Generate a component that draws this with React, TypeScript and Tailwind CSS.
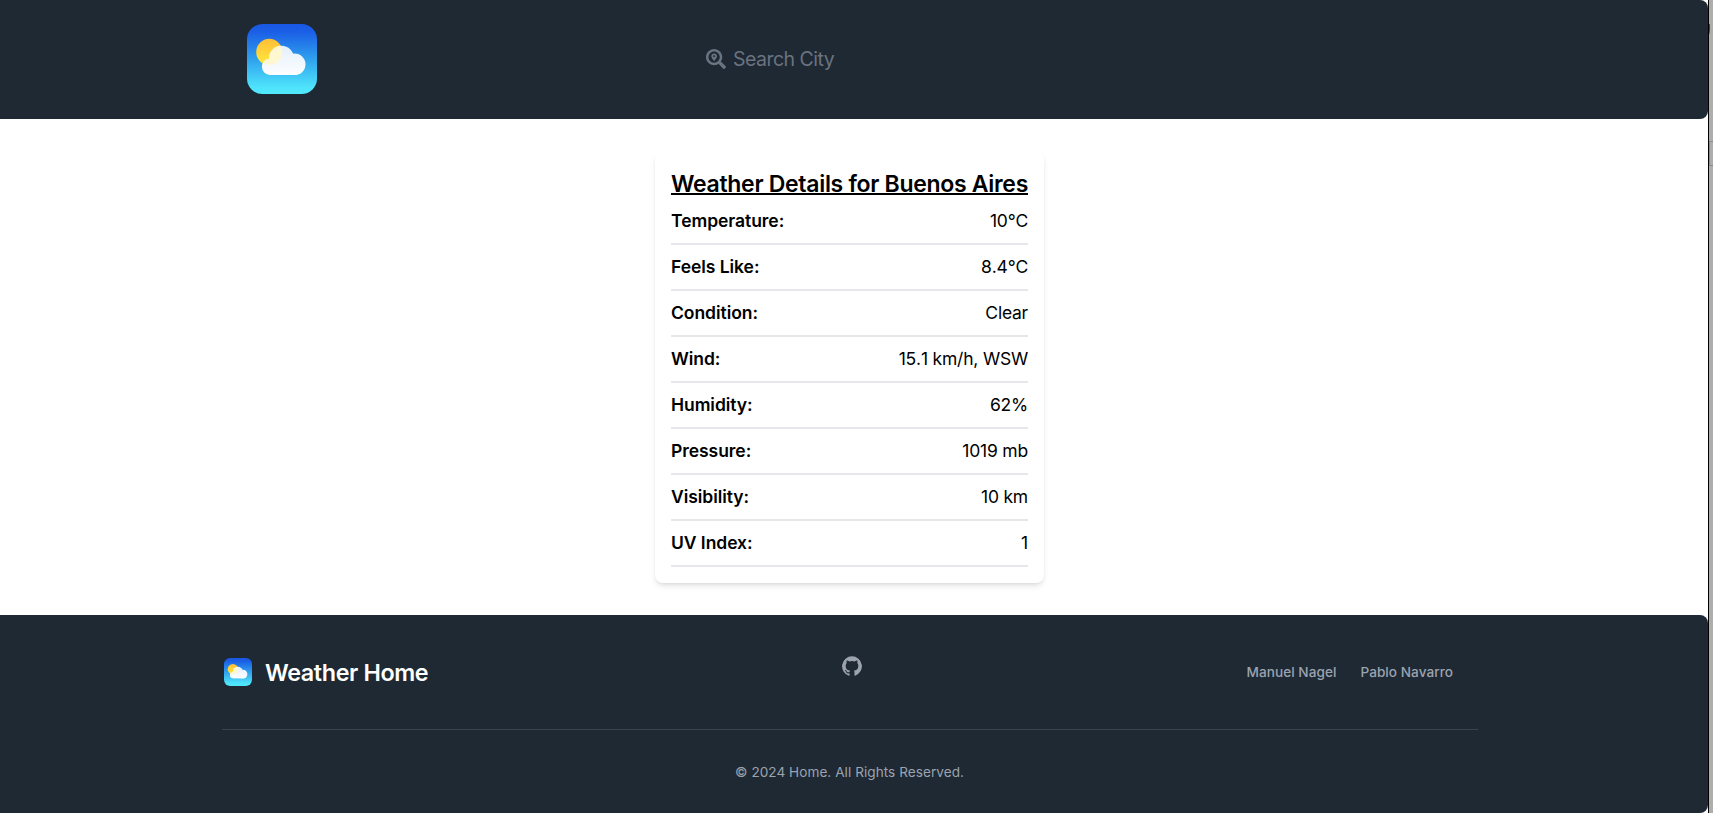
import { useId } from "react";
import { FaSearchLocation } from "react-icons/fa";

const details = [
  { label: "Temperature:", value: "10°C" },
  { label: "Feels Like:", value: "8.4°C" },
  { label: "Condition:", value: "Clear" },
  { label: "Wind:", value: "15.1 km/h, WSW" },
  { label: "Humidity:", value: "62%" },
  { label: "Pressure:", value: "1019 mb" },
  { label: "Visibility:", value: "10 km" },
  { label: "UV Index:", value: "1" },
];

function CloudShape() {
  return (
    <>
      <circle cx="34.5" cy="34.3" r="12.5" />
      <circle cx="47.7" cy="40.3" r="10.8" />
      <circle cx="23" cy="42.8" r="8.1" />
      <rect x="23" y="36" width="25" height="15" />
    </>
  );
}

function WeatherLogo({ className }: { className: string }) {
  const id = useId();
  return (
    <svg viewBox="0 0 70 70" className={className} aria-hidden="true">
      <defs>
        <linearGradient id={`${id}sky`} x1="0" y1="0" x2="0" y2="1">
          <stop offset="0" stopColor="#1a57e4" />
          <stop offset="0.12" stopColor="#1b60e6" />
          <stop offset="0.5" stopColor="#2fa0ee" />
          <stop offset="0.9" stopColor="#4ee3fb" />
          <stop offset="1" stopColor="#50e9fd" />
        </linearGradient>
        <linearGradient id={`${id}sun`} x1="0" y1="0" x2="0" y2="1">
          <stop offset="0" stopColor="#ffbe38" />
          <stop offset="1" stopColor="#ffe93c" />
        </linearGradient>
        <linearGradient id={`${id}cloud`} gradientUnits="userSpaceOnUse" x1="0" y1="22" x2="0" y2="51">
          <stop offset="0" stopColor="#e3effc" />
          <stop offset="1" stopColor="#fdfeff" />
        </linearGradient>
        <clipPath id={`${id}clip`}>
          <CloudShape />
        </clipPath>
      </defs>
      <rect width="70" height="70" rx="15.5" fill={`url(#${id}sky)`} />
      <circle cx="22.3" cy="27.9" r="13.1" fill={`url(#${id}sun)`} />
      <g fill={`url(#${id}cloud)`}>
        <CloudShape />
      </g>
      <circle cx="22.3" cy="27.9" r="13.1" fill="#fff6d2" clipPath={`url(#${id}clip)`} />
    </svg>
  );
}

function GithubIcon() {
  return (
    <svg viewBox="0 0 20 20" fill="currentColor" className="size-5" aria-hidden="true">
      <path
        fillRule="evenodd"
        clipRule="evenodd"
        d="M10 .333A9.911 9.911 0 0 0 6.866 19.65c.5.092.678-.215.678-.477 0-.237-.01-1.017-.014-1.845-2.757.6-3.338-1.169-3.338-1.169a2.627 2.627 0 0 0-1.1-1.451c-.9-.615.07-.6.07-.6a2.084 2.084 0 0 1 1.518 1.021 2.11 2.11 0 0 0 2.884.823c.044-.503.268-.973.63-1.325-2.2-.25-4.516-1.1-4.516-4.9A3.832 3.832 0 0 1 4.7 7.068a3.56 3.56 0 0 1 .095-2.623s.832-.266 2.726 1.016a9.409 9.409 0 0 1 4.962 0c1.89-1.282 2.717-1.016 2.717-1.016.366.83.402 1.768.1 2.623a3.827 3.827 0 0 1 1.02 2.659c0 3.807-2.319 4.644-4.525 4.889a2.366 2.366 0 0 1 .673 1.834c0 1.326-.012 2.394-.012 2.72 0 .263.18.572.681.475A9.911 9.911 0 0 0 10 .333Z"
      />
    </svg>
  );
}

function Header() {
  return (
    <header className="flex h-[119px] items-center rounded-r-lg bg-[#1e2934] pb-[2px] pl-[247px]">
      <WeatherLogo className="size-[70px]" />
      <div className="ml-[389px] flex items-center gap-[7px] text-[#6b7280]">
        <FaSearchLocation className="size-5" />
        <span className="text-[19.5px] leading-7 tracking-[-0.52px]">Search City</span>
      </div>
    </header>
  );
}

function DetailsCard() {
  return (
    <section className="w-[389px] rounded-lg bg-white p-4 text-black shadow-md">
      <h1 className="pt-[3px] text-[23px] leading-[29px] font-semibold tracking-[-0.3px] whitespace-nowrap underline decoration-2 underline-offset-[1px] [text-decoration-skip-ink:none]">
        Weather Details for Buenos Aires
      </h1>
      <dl>
        {details.map(({ label, value }) => (
          <div
            key={label}
            className="flex justify-between border-b-2 border-[#e5e7eb] py-2 text-[17.5px] leading-7"
          >
            <dt className="font-semibold tracking-[-0.05px]">{label}</dt>
            <dd className="tracking-[-0.2px] [font-kerning:none]">{value}</dd>
          </div>
        ))}
      </dl>
    </section>
  );
}

function Footer() {
  return (
    <footer className="h-[198px] rounded-r-lg bg-[#1e2934] px-[222px] pt-[41px] text-[13.6px] leading-5 text-[#9ca3af]">
      <div className="grid w-[1256px] grid-cols-[1fr_auto_1fr] items-start">
        <div className="flex h-8 items-center gap-[13px] pl-0.5">
          <WeatherLogo className="size-7" />
          <span className="pt-0.5 text-[23.3px] leading-8 font-semibold tracking-[-0.37px] text-white">
            Weather Home
          </span>
        </div>
        <a className="ml-1">
          <GithubIcon />
        </a>
        <ul className="flex h-8 items-center justify-end gap-6 pr-[25px] font-medium tracking-[0.05px]">
          <li>Manuel Nagel</li>
          <li>Pablo Navarro</li>
        </ul>
      </div>
      <hr className="mt-[41px] w-[1256px] border-[#37434f]" />
      <p className="mt-8 w-[1255px] text-center tracking-[0.04px]">© 2024 Home. All Rights Reserved.</p>
    </footer>
  );
}

export default function App() {
  return (
    <div className="flex h-[813px] overflow-hidden bg-white font-['Inter',sans-serif]">
      <div className="flex w-[1708px] flex-col">
        <Header />
        <main className="flex flex-1 items-start justify-center pt-8 pr-[9px]">
          <DetailsCard />
        </main>
        <Footer />
      </div>
      <div className="w-px bg-black" />
      <div className="flex flex-1 flex-col bg-[#adadab]">
        <div className="mt-6 h-[10px] w-px bg-[linear-gradient(#4a4a4c,#3a3d45_50%,#8f7a6b)]" />
        <div className="mt-[107px] h-[25px] border-y border-l border-[#8b8b8a]" />
      </div>
    </div>
  );
}
